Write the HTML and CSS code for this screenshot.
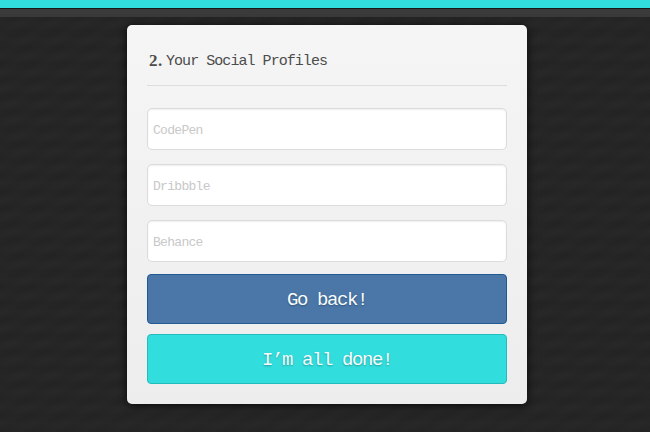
FILE: index.html
```html
<!DOCTYPE html>
<html lang="en">
<head>
<meta charset="utf-8">
<title>Your Social Profiles</title>
<link rel="stylesheet" href="styles.css">
</head>
<body>
<form class="card">
  <h2 class="title"><b class="step">2.</b><span class="title-text">Your Social Profiles</span></h2>
  <input class="field" type="text" placeholder="CodePen">
  <input class="field" type="text" placeholder="Dribbble">
  <input class="field last" type="text" placeholder="Behance">
  <button class="btn back" type="button">Go back!</button>
  <button class="btn done" type="button">I’m all done!</button>
</form>
</body>
</html>
```
FILE: styles.css
```css
* { box-sizing: border-box; }
html { background: #252525; }
body {
  margin: 0;
  height: 432px;
  overflow: hidden;
  border-top: 8px solid #32dedd;
  padding-top: 17px;
  background:
    linear-gradient(#181818 0, #181818 1px, #3b3b3b 1px, #393939 9px, transparent 9px),
    repeating-linear-gradient(150deg, rgba(0,0,0,.06) 0, rgba(0,0,0,0) 8px, rgba(0,0,0,.06) 16px),
    repeating-linear-gradient(#282828 0, #252525 8px, #282828 16px);
  font-family: "Liberation Mono", monospace;
}
.card {
  width: 400px;
  height: 379px;
  margin: 0 auto;
  position: relative;
  left: 2px;
  padding: 20px;
  border-radius: 5px;
  background: linear-gradient(#f5f5f5, #ededed);
  box-shadow: 0 1px 8px rgba(0,0,0,.8);
}
.title {
  display: flex;
  align-items: center;
  height: 41px;
  margin: 0 0 22px;
  padding: 0 0 8px 2px;
  border-bottom: 1px solid #dcdcdc;
  color: #4c4c4c;
  font-size: 15px;
  font-weight: normal;
  line-height: 20px;
}
.step { width: 17px; font-family: "Liberation Serif", serif; font-size: 17px; letter-spacing: .5px; }
.title-text { padding-top: 2px; letter-spacing: -.95px; }
.field {
  display: block;
  width: 100%;
  height: 42px;
  margin: 0 0 14px;
  padding: 3px 5px 0;
  border: 1px solid #dcdcdc;
  border-radius: 5px;
  background: #fff;
  box-shadow: inset 0 1px 2px rgba(0,0,0,.07);
  font: 13px "Liberation Mono", monospace;
  letter-spacing: -.7px;
}
.field::placeholder { color: #c8c8c8; opacity: 1; }
.last { margin-bottom: 12px; }
.btn {
  display: block;
  width: 100%;
  height: 50px;
  margin: 0 0 10px;
  padding: 2px 0 0;
  border: 1px solid;
  border-radius: 4px;
  color: #f7fcfc;
  font: 19px "Liberation Mono", monospace;
  letter-spacing: -1.4px;
  text-shadow: 0 1px 2px rgba(0,0,0,.3);
}
.back { background: #4a77a8; border-color: #205a93; }
.done { background: #32dedd; border-color: #24bcba; }
```
